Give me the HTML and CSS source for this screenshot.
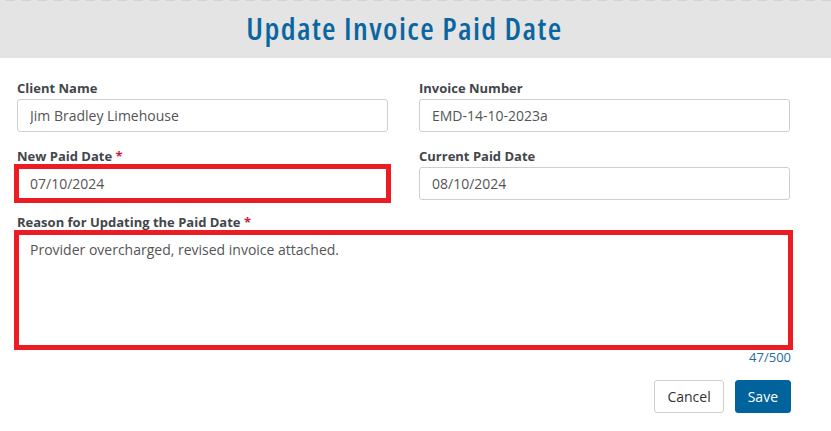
FILE: index.html
```html
<!DOCTYPE html>
<html>
<head>
	<meta http-equiv="Content-Type" content="text/html; charset=utf-8">
	<link rel="stylesheet" href="styles.css">
</head>
<body>
	<div class="modal">
		<div class="modal-head">
			<h2>Update Invoice Paid Date</h2>
		</div>
		<div class="modal-body">
			<div class="grid">
				<div class="field">
					<label>Client Name</label>
					<input type="text" class="box" value="Jim Bradley Limehouse">
				</div>
				<div class="field">
					<label>Invoice Number</label>
					<input type="text" class="box" value="EMD-14-10-2023a">
				</div>
				<div class="field row2">
					<label>New Paid Date <span class="req">*</span></label>
					<input type="text" class="box flag" value="07/10/2024">
				</div>
				<div class="field row2">
					<label>Current Paid Date</label>
					<input type="text" class="box" value="08/10/2024">
				</div>
				<div class="field wide">
					<label>Reason for Updating the Paid Date <span class="req">*</span></label>
					<textarea class="box area flag">Provider overcharged, revised invoice attached.</textarea>
					<div class="count">47/500</div>
				</div>
			</div>
			<div class="actions">
				<button class="btn cancel">Cancel</button>
				<button class="btn save">Save</button>
			</div>
		</div>
	</div>
</body>
</html>
```
FILE: styles.css
```css
*{margin:0;padding:0;box-sizing:border-box;}
body{
	background:#fff;
	font-family:"Open Sans","Liberation Sans",sans-serif;
	color:#333;
}
.modal{
	width:831px;
	height:431px;
	overflow:hidden;
}
.modal-head{
	height:58px;
	background-color:#e4e4e4;
	background-image:repeating-linear-gradient(90deg,transparent 0,transparent 5px,#d3d3d3 5px,#d3d3d3 15px,transparent 15px,transparent 16px);
	background-size:100% 1px;
	background-repeat:no-repeat;
	text-align:center;
}
.modal-head h2{
	font-size:31px;
	font-weight:600;
	font-stretch:75%;
	letter-spacing:1.4px;
	line-height:56px;
	color:#0a66a0;
	padding-right:22px;
}
.modal-body{
	padding:21px 41px 0 17px;
}
.grid{
	display:grid;
	grid-template-columns:1fr 1fr;
	column-gap:31px;
}
.field label{
	display:block;
	font-size:13px;
	font-weight:700;
	line-height:18px;
	color:#42464b;
	margin-bottom:2px;
}
.field.row2{
	margin-top:15px;
}
.field.wide{
	grid-column:1 / span 2;
	margin-top:13px;
}
.req{color:#c4203a;}
.box{
	display:block;
	width:100%;
	height:33px;
	border:1px solid #cfcfcf;
	border-radius:3px;
	padding:0 12px;
	font-family:inherit;
	font-size:14px;
	color:#555;
	background:#fff;
}
.area{
	height:114px;
	padding:6px 12px;
	resize:none;
	line-height:20px;
}
.flag{
	border-radius:0;
	outline:5px solid #ec1c24;
	outline-offset:-2px;
}
.count{
	text-align:right;
	font-size:13px;
	line-height:16px;
	color:#1d6ca5;
	margin-top:2px;
	margin-right:-1px;
}
.actions{
	display:flex;
	justify-content:flex-end;
	gap:11px;
	margin-top:15px;
	margin-right:-1px;
}
.btn{
	height:33px;
	border-radius:3px;
	font-family:inherit;
	font-size:14px;
	padding:0 12px;
}
.cancel{
	background:#fff;
	border:1px solid #cfcfcf;
	color:#333;
}
.save{
	background:#00639c;
	border:1px solid #00639c;
	color:#fff;
}
```
